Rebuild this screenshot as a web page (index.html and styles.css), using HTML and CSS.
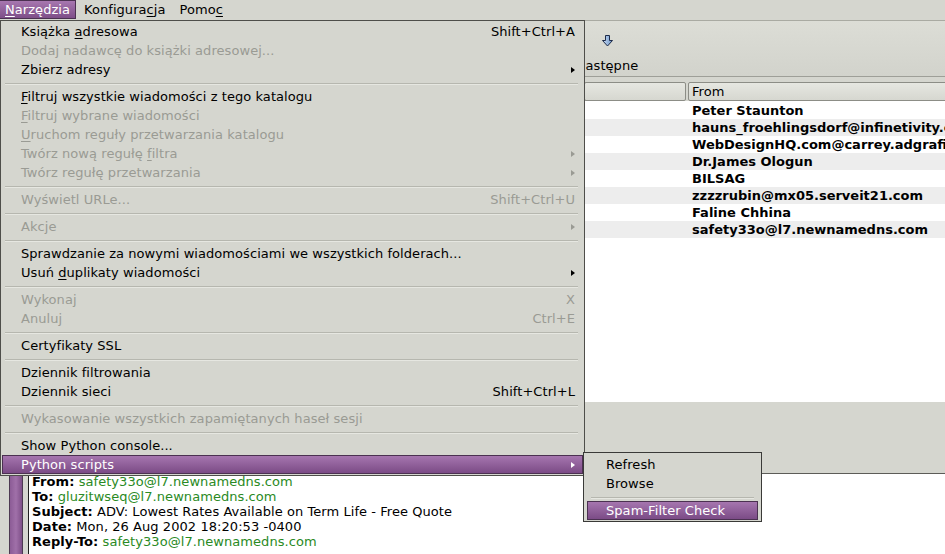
FILE: index.html
```html
<!DOCTYPE html>
<html lang="pl">
<head>
<meta charset="utf-8">
<title>Narzędzia</title>
<link rel="stylesheet" href="styles.css">
</head>
<body>
<div class="app">
  <div class="menubar">
    <span class="mb-item active"><u>N</u>arzędzia</span>
    <span class="mb-item">Konfigura<u>c</u>ja</span>
    <span class="mb-item">Pomo<u>c</u></span>
  </div>

  <div class="toolbar">
    <div class="tb-btn">
      <svg class="tb-icon" width="13" height="12" viewBox="0 0 13 12">
        <defs>
          <linearGradient id="ag" x1="0" y1="0" x2="1" y2="0">
            <stop offset="0" stop-color="#c9dcf4"/>
            <stop offset="1" stop-color="#6d95c8"/>
          </linearGradient>
        </defs>
        <path d="M4.5 0.5 H8.5 V5.5 H11.5 L6.5 11 L1.5 5.5 H4.5 Z" fill="url(#ag)" stroke="#1d2b4a" stroke-width="1" stroke-linejoin="miter"/>
      </svg>
      <span class="tb-label">Następne</span>
    </div>
  </div>

  <div class="main">
    <div class="folders"></div>
    <div class="list">
      <div class="list-frame">
        <div class="headers">
          <div class="hdr hdr-first"></div>
          <div class="hdr hdr-from">From</div>
        </div>
        <div class="rows">
          <div class="row">Peter Staunton</div>
          <div class="row alt">hauns_froehlingsdorf@infinetivity.com</div>
          <div class="row">WebDesignHQ.com@carrey.adgrafix.com</div>
          <div class="row alt">Dr.James Ologun</div>
          <div class="row">BILSAG</div>
          <div class="row alt">zzzzrubin@mx05.serveit21.com</div>
          <div class="row">Faline Chhina</div>
          <div class="row alt">safety33o@l7.newnamedns.com</div>
        </div>
      </div>
      <div class="list-footer"></div>
    </div>
  </div>

  <div class="preview">
    <div class="pv-strip"><div class="pv-bar"></div></div>
    <div class="pv-body">
      <div class="pv-line"><b>From:</b> <span class="addr">safety33o@l7.newnamedns.com</span></div>
      <div class="pv-line"><b>To:</b> <span class="addr">gluzitwseq@l7.newnamedns.com</span></div>
      <div class="pv-line"><b>Subject:</b> ADV: Lowest Rates Available on Term Life - Free Quote</div>
      <div class="pv-line"><b>Date:</b> Mon, 26 Aug 2002 18:20:53 -0400</div>
      <div class="pv-line"><b>Reply-To:</b> <span class="addr">safety33o@l7.newnamedns.com</span></div>
    </div>
  </div>

  <div class="menu">
    <div class="mi"><span>Książka <u>a</u>dresowa</span><span class="sc">Shift+Ctrl+A</span></div>
    <div class="mi dis"><span>Dodaj nadawcę do książki adresowej...</span></div>
    <div class="mi"><span>Zbierz adresy</span><span class="arrow"></span></div>
    <div class="sep"></div>
    <div class="mi"><span><u>F</u>iltruj wszystkie wiadomości z tego katalogu</span></div>
    <div class="mi dis"><span><u>F</u>iltruj wybrane wiadomości</span></div>
    <div class="mi dis"><span><u>U</u>ruchom reguły przetwarzania katalogu</span></div>
    <div class="mi dis"><span>Twórz nową regułę <u>f</u>iltra</span><span class="arrow"></span></div>
    <div class="mi dis"><span>Twórz regułę przetwarzania</span><span class="arrow"></span></div>
    <div class="sep"></div>
    <div class="mi dis"><span>Wyświetl URLe...</span><span class="sc">Shift+Ctrl+U</span></div>
    <div class="sep"></div>
    <div class="mi dis"><span>Akcje</span><span class="arrow"></span></div>
    <div class="sep"></div>
    <div class="mi"><span>Sprawdzanie za nowymi wiadomościami we wszystkich folderach...</span></div>
    <div class="mi"><span>Usuń <u>d</u>uplikaty wiadomości</span><span class="arrow"></span></div>
    <div class="sep"></div>
    <div class="mi dis"><span>Wykonaj</span><span class="sc">X</span></div>
    <div class="mi dis"><span>Anuluj</span><span class="sc">Ctrl+E</span></div>
    <div class="sep"></div>
    <div class="mi"><span>Certyfikaty SSL</span></div>
    <div class="sep"></div>
    <div class="mi"><span>Dziennik filtrowania</span></div>
    <div class="mi"><span>Dziennik sieci</span><span class="sc">Shift+Ctrl+L</span></div>
    <div class="sep"></div>
    <div class="mi dis"><span>Wykasowanie wszystkich zapamiętanych haseł sesji</span></div>
    <div class="sep"></div>
    <div class="mi"><span>Show Python console...</span></div>
    <div class="mi hl"><span>Python scripts</span><span class="arrow"></span></div>
  </div>

  <div class="submenu">
    <div class="mi"><span>Refresh</span></div>
    <div class="mi"><span>Browse</span></div>
    <div class="sep"></div>
    <div class="mi hl"><span>Spam-Filter Check</span></div>
  </div>
</div>
</body>
</html>
```

FILE: styles.css
```css
html, body {
  margin: 0;
  padding: 0;
}

body {
  font-family: "DejaVu Sans", "Noto Sans", sans-serif;
  font-size: 13px;
  letter-spacing: 0.06px;
  color: #000;
  background: #d5d6cf;
}

u {
  text-decoration: underline;
  text-underline-offset: 2px;
  text-decoration-thickness: 1px;
}

.app {
  position: relative;
  width: 945px;
  height: 554px;
  overflow: hidden;
  background: #d5d6cf;
  display: flex;
  flex-direction: column;
}

/* ---------- menubar ---------- */
.menubar {
  height: 20px;
  flex: none;
  display: flex;
  align-items: stretch;
  border-bottom: 1px solid #a9aaa2;
  background: #d5d6cf;
}

.mb-item {
  display: flex;
  align-items: center;
  padding: 0 6px 1px 8px;
  line-height: 19px;
  height: 19px;
  box-sizing: border-box;
}

.mb-item.active {
  width: 76px;
  color: #fff;
  background: linear-gradient(#a777b0, #7e4e88);
  border: 1px solid #4b3151;
  border-left: none;
  padding: 0 6px 1px 5px;
}

/* ---------- toolbar ---------- */
.toolbar {
  height: 55px;
  flex: none;
  display: flex;
  align-items: stretch;
  padding-left: 570px;
  border-bottom: 1px solid #9e9f98;
  background: linear-gradient(#dcddd6, #d2d3cc);
}

.tb-btn {
  width: 74px;
  display: flex;
  flex-direction: column;
  align-items: center;
  padding-top: 14px;
  box-sizing: border-box;
}

.tb-icon {
  display: block;
}

.tb-label {
  margin-top: 11px;
  line-height: 15px;
}

/* ---------- main ---------- */
.main {
  flex: none;
  height: 396px;
  display: flex;
}

.folders {
  width: 584px;
  flex: none;
}

.list {
  flex: 1;
  display: flex;
  flex-direction: column;
  padding-top: 5px;
}

.list-frame {
  height: 320px;
  background: #fff;
  display: flex;
  flex-direction: column;
}

.headers {
  height: 19px;
  flex: none;
  display: flex;
  gap: 2px;
  background: #d5d6cf;
  padding-right: 1px;
}

.hdr {
  box-sizing: border-box;
  height: 19px;
  border: 1px solid #8c8d86;
  border-radius: 2px;
  background: linear-gradient(#e6e7e1, #d6d7d0);
  line-height: 17px;
  padding-left: 3px;
}

.hdr-first {
  width: 102px;
}

.hdr-from {
  flex: 1;
}

.rows {
  flex: 1;
  padding-top: 1px;
}

.row {
  height: 17px;
  line-height: 17px;
  padding-left: 108px;
  font-weight: bold;
  letter-spacing: 0;
  white-space: nowrap;
  overflow: hidden;
}

.row.alt {
  background: #ededed;
}

.list-footer {
  flex: 1;
  background: #d5d6cf;
}

/* ---------- preview ---------- */
.preview {
  flex: 1;
  display: flex;
  border-top: 1px solid #5c5c58;
}

.pv-strip {
  width: 29px;
  flex: none;
  background: #d5d6cf;
  border-right: 1px solid #202020;
  padding-left: 9px;
  box-sizing: border-box;
}

.pv-bar {
  width: 14px;
  height: 100%;
  box-sizing: border-box;
  border-left: 1px solid #4d3a52;
  border-right: 1px solid #4d3a52;
  background: linear-gradient(to right, #8c5c96, #a070a9 50%, #7e4f88);
}

.pv-body {
  flex: 1;
  background: #fff;
  padding: 0 0 0 3px;
}

.pv-line {
  height: 15px;
  line-height: 15px;
  white-space: nowrap;
}

.addr {
  color: #2a8a24;
}

/* ---------- dropdown menu ---------- */
.menu {
  position: absolute;
  left: 0;
  top: 20px;
  width: 585px;
  box-sizing: border-box;
  border: 1px solid #4e4e4a;
  padding: 1px;
  background: #d5d6cf;
}

.mi {
  display: flex;
  align-items: center;
  height: 19px;
  line-height: 19px;
  padding: 0 8px 0 19px;
  white-space: nowrap;
  box-sizing: border-box;
}

.mi.dis {
  color: #9a9b94;
}

.mi .sc {
  margin-left: auto;
}

.mi .arrow {
  margin-left: auto;
  width: 0;
  height: 0;
  border-left: 4px solid #000;
  border-top: 3px solid transparent;
  border-bottom: 3px solid transparent;
  margin-right: 0;
}

.mi.dis .arrow {
  border-left-color: #9a9b94;
}

.mi.hl {
  color: #fff;
  background: linear-gradient(#a676af, #7b4b86);
  border: 1px solid #4b3151;
  padding-left: 18px;
  padding-right: 7px;
}

.mi.hl .arrow {
  border-left-color: #fff;
}

.sep {
  height: 8px;
  display: flex;
  align-items: center;
  padding: 0 5px 0 3px;
}

.sep::before {
  content: "";
  flex: 1;
  height: 1px;
  background: #b6b7af;
  box-shadow: 0 1px 0 #e6e7e1;
}

/* ---------- submenu ---------- */
.submenu {
  position: absolute;
  left: 583px;
  top: 452px;
  width: 179px;
  box-sizing: border-box;
  border: 1px solid #3a3a38;
  padding: 2px 3px 1px 3px;
  background: #d5d6cf;
}

.submenu .sep {
  padding: 0 4px 0 4px;
}
```
